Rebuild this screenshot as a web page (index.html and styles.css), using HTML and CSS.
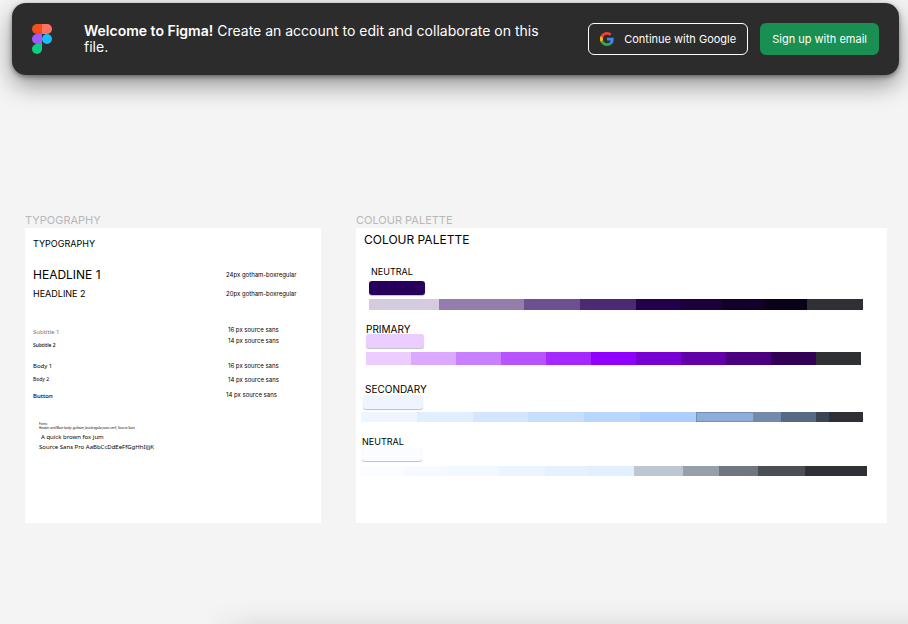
FILE: index.html
```html
<!DOCTYPE html>
<html lang="en">
<head>
<meta charset="utf-8">
<meta name="viewport" content="width=device-width, initial-scale=1">
<title>Figma</title>
<link rel="stylesheet" href="styles.css">
</head>
<body>
<header class="banner">
  <svg class="logo" viewBox="0 0 20 30" aria-hidden="true">
    <path fill="#f24e1e" d="M5 0h5v10H5A5 5 0 0 1 5 0z"/>
    <path fill="#ff7262" d="M10 0h5a5 5 0 0 1 0 10h-5z"/>
    <path fill="#a259ff" d="M5 10h5v10H5a5 5 0 0 1 0-10z"/>
    <circle fill="#1abcfe" cx="15" cy="15" r="5"/>
    <path fill="#0acf83" d="M5 20h5v5a5 5 0 1 1-5-5z"/>
  </svg>
  <p class="message"><strong>Welcome to Figma!</strong> Create an account to edit and collaborate on this file.</p>
  <div class="actions">
    <button class="button google" type="button">
      <svg class="google-icon" viewBox="0 0 48 48" aria-hidden="true">
        <path fill="#ea4335" d="M24 9.5c3.54 0 6.71 1.22 9.21 3.6l6.85-6.85C35.9 2.38 30.47 0 24 0 14.62 0 6.51 5.38 2.56 13.22l7.98 6.19C12.43 13.72 17.74 9.5 24 9.5z"/>
        <path fill="#4285f4" d="M46.98 24.55c0-1.57-.15-3.09-.38-4.55H24v9.02h12.94c-.58 2.96-2.26 5.48-4.78 7.18l7.73 6c4.51-4.18 7.09-10.36 7.09-17.65z"/>
        <path fill="#fbbc05" d="M10.53 28.59c-.48-1.45-.76-2.99-.76-4.59s.27-3.14.76-4.59l-7.98-6.19C.92 16.46 0 20.12 0 24c0 3.88.92 7.54 2.56 10.78l7.97-6.19z"/>
        <path fill="#34a853" d="M24 48c6.48 0 11.93-2.13 15.89-5.81l-7.73-6c-2.15 1.45-4.92 2.3-8.16 2.3-6.26 0-11.57-4.22-13.47-9.91l-7.98 6.19C6.51 42.62 14.62 48 24 48z"/>
      </svg>
      Continue with Google
    </button>
    <button class="button signup" type="button">Sign up with email</button>
  </div>
</header>

<main class="canvas">
  <section class="artboard typography">
    <h2 class="artboard-name">TYPOGRAPHY</h2>
    <div class="sheet">
      <h3 class="sheet-title">TYPOGRAPHY</h3>
      <div class="specs">
        <div class="names">
          <p class="headline-1">HEADLINE 1</p>
          <p class="headline-2">HEADLINE 2</p>
          <p class="subtitle-1">Subtitle 1</p>
          <p class="subtitle-2">Subtitle 2</p>
          <p class="body-1">Body 1</p>
          <p class="body-2">Body 2</p>
          <p class="button-text">Button</p>
        </div>
        <div class="sizes">
          <p class="size-headline-1">24px gotham-boxregular</p>
          <p class="size-headline-2">20px gotham-boxregular</p>
          <div class="source">
            <p>16 px source sans</p>
            <p>14 px source sans</p>
            <p class="size-body-1">16 px source sans</p>
            <p class="size-body-2">14 px source sans</p>
          </div>
          <p class="size-button">14 px source sans</p>
        </div>
      </div>
      <div class="samples">
        <p class="note">Fonts:<br>Header and Main body: gotham_bookregular,sans-serif, Source Sans</p>
        <p class="fox">A quick brown fox jum</p>
        <p class="alphabet">Source Sans Pro AaBbCcDdEeFfGgHhIiJjK</p>
      </div>
    </div>
  </section>

  <section class="artboard palette">
    <h2 class="artboard-name">COLOUR PALETTE</h2>
    <div class="sheet">
      <h3 class="palette-title">COLOUR PALETTE</h3>
      <div class="group ink">
        <h4>NEUTRAL</h4>
        <div class="swatch"></div>
        <div class="ramp">
          <i style="flex-grow:70;background:#d4cbdf"></i><i style="flex-grow:85;background:#927dac"></i><i style="flex-grow:56;background:#6d5090"></i><i style="flex-grow:56;background:#4b2975"></i><i style="flex-grow:44;background:#22004b"></i><i style="flex-grow:42;background:#1b003b"></i><i style="flex-grow:42;background:#13002a"></i><i style="flex-grow:43;background:#0b0019"></i><i style="flex-grow:56;background:#2f3033"></i>
        </div>
      </div>
      <div class="group primary">
        <h4>PRIMARY</h4>
        <div class="swatch"></div>
        <div class="ramp">
          <i style="flex-grow:45;background:#ebcdff"></i><i style="flex-grow:45;background:#dba9ff"></i><i style="flex-grow:45;background:#c980ff"></i><i style="flex-grow:45;background:#b854ff"></i><i style="flex-grow:45;background:#a428ff"></i><i style="flex-grow:45;background:#9000ff"></i><i style="flex-grow:45;background:#7800d3"></i><i style="flex-grow:45;background:#6200a9"></i><i style="flex-grow:45;background:#4a007f"></i><i style="flex-grow:45;background:#320054"></i><i style="flex-grow:45;background:#2f3033"></i>
        </div>
      </div>
      <div class="group secondary">
        <h4>SECONDARY</h4>
        <div class="swatch"></div>
        <div class="ramp">
          <i style="flex-grow:56;background:#eef5ff"></i><i style="flex-grow:56;background:#e1eeff"></i><i style="flex-grow:56;background:#d4e6ff"></i><i style="flex-grow:56;background:#c6deff"></i><i style="flex-grow:56;background:#b8d7ff"></i><i style="flex-grow:56;background:#adcfff"></i><i class="selected" style="flex-grow:57;background:#8fadd6"></i><i style="flex-grow:27;background:#728bac"></i><i style="flex-grow:35;background:#566982"></i><i style="flex-grow:13;background:#394555"></i><i style="flex-grow:34;background:#2f3033"></i>
        </div>
      </div>
      <div class="group pale">
        <h4>NEUTRAL</h4>
        <div class="swatch"></div>
        <div class="ramp">
          <i style="flex-grow:44;background:#fafcff"></i><i style="flex-grow:43;background:#f6faff"></i><i style="flex-grow:52;background:#f2f8ff"></i><i style="flex-grow:46;background:#ebf4ff"></i><i style="flex-grow:42;background:#e5f1ff"></i><i style="flex-grow:47;background:#e1f0ff"></i><i style="flex-grow:49;background:#bcc7d2"></i><i style="flex-grow:36;background:#979fa9"></i><i style="flex-grow:39;background:#70767f"></i><i style="flex-grow:47;background:#4b4f53"></i><i style="flex-grow:62;background:#2f3034"></i>
        </div>
      </div>
    </div>
  </section>
</main>
<div class="bottom-shade" aria-hidden="true"></div>
</body>
</html>
```

FILE: styles.css
```css
* { box-sizing: border-box; }

body {
  display: flow-root;
  margin: 0;
  min-height: 100vh;
  position: relative;
  background: #f4f4f4;
  color: #000;
  font-family: Inter, "Liberation Sans", sans-serif;
}

h2, h3, h4, p { margin: 0; font-weight: 400; }

/* Sign-up banner */
.banner {
  display: flex;
  align-items: center;
  min-height: 72px;
  margin: 3px 9px 0 12px;
  padding: 0 20px;
  border-radius: 14px;
  background: #2c2c2c;
  color: #fff;
  box-shadow: 0 2px 5px rgba(0, 0, 0, 0.4), 0 10px 24px rgba(0, 0, 0, 0.4);
}

.logo { flex: none; width: 20px; height: 30px; }

.message {
  flex: 1;
  margin: 0 32px;
  font-size: 14px;
  line-height: 16px;
}

.message strong { font-weight: 600; }

.actions { display: flex; gap: 12px; }

.button {
  display: flex;
  align-items: center;
  height: 32px;
  padding: 0 12px;
  border: 0;
  border-radius: 6px;
  color: #fff;
  font: 11px/16px Inter, "Liberation Sans", sans-serif;
  white-space: nowrap;
}

.google { gap: 10px; padding: 0 11px; border: 1px solid #fff; background: transparent; }
.google-icon { width: 14px; height: 14px; }
.signup { background: #198f51; }

/* Canvas with its two artboards */
.canvas {
  display: flex;
  gap: 35px;
  padding: 138px 21px 0 25px;
}

.artboard { min-width: 0; }
.typography { flex: 296 1 0; }
.palette { flex: 531 1 0; }

.artboard-name {
  color: #b8b8b8;
  font-size: 11px;
  line-height: 15px;
}

.sheet { min-height: 295px; background: #fff; }

/* Typography sheet */
.typography .sheet { padding: 10px 8px; }
.sheet-title { font-size: 9px; line-height: 12px; }

.specs { display: flex; margin-top: 19px; }
.names { flex: 193 1 0; line-height: 12px; }
.sizes { flex: 87 1 0; font-size: 6px; line-height: 11px; white-space: nowrap; }

.headline-1 { font-size: 12px; }
.headline-2 { margin-top: 7px; font-size: 9px; }
.subtitle-1, .subtitle-2, .body-1, .body-2, .button-text, .samples { font-family: "Noto Sans", sans-serif; }
.subtitle-1 { margin-top: 26px; color: #777; font-size: 6px; }
.subtitle-2 { margin-top: 1px; font-size: 5px; font-weight: 500; }
.body-1 { margin-top: 9px; font-size: 6px; }
.body-2 { margin-top: 1px; font-size: 5px; }
.button-text { margin-top: 5px; font-size: 6px; font-weight: 500; }

.source { margin-top: 25px; padding-left: 2px; }
.size-headline-2 { margin-top: 8px; }
.size-body-1 { margin-top: 14px; }
.size-body-2 { margin-top: 3px; }
.size-button { margin-top: 4px; }

.samples { margin-top: 20px; padding-left: 6px; font-size: 6px; line-height: 10px; }
.note { font-size: 3px; line-height: 4px; }
.fox { margin-top: 2px; padding-left: 2px; }

/* Palette sheet */
.palette .sheet { padding: 5px 20px 0 4px; }
.palette-title { padding-left: 4px; font-size: 12px; line-height: 14px; }

.group h4 { font-size: 9px; line-height: 12px; }
.swatch { width: 60px; height: 14px; border-radius: 3px; box-shadow: 0 1px 1px rgba(0, 0, 0, 0.25); }
.ramp { display: flex; height: 10px; margin-top: 4px; }
.ramp i { flex: 1 1 0; }
.ramp .selected { border: 1px solid #7090bc; }

.ink { margin: 19px 4px 0 9px; }
.ink h4 { padding-left: 2px; }
.ink .swatch { width: 56px; margin-top: 3px; background: #26005a; }
.ink .ramp { height: 11px; }

.primary { margin: 14px 6px 0 6px; }
.primary h4 { font-size: 10px; line-height: 10px; }
.primary .swatch { width: 58px; background: #ebcdff; }
.primary .ramp { height: 13px; }

.secondary { margin: 18px 4px 0 1px; }
.secondary h4 { padding-left: 4px; font-size: 10px; }
.secondary .swatch { margin-left: 2px; background: #eef5ff; }
.secondary .ramp { margin-top: 3px; }

.pale { margin: 14px 0 0; }
.pale h4 { padding-left: 2px; }
.pale .swatch { height: 13px; margin-left: 2px; background: #fbfcff; }
.pale .ramp { margin-top: 5px; }

/* Shade cast by the panel below the window edge */
.bottom-shade {
  position: absolute;
  bottom: 0;
  left: 205px;
  right: 0;
  height: 24px;
  background: linear-gradient(to top, rgba(0, 0, 0, 0.06), rgba(0, 0, 0, 0.02) 50%, transparent);
  mask-image: linear-gradient(to right, transparent, #000 50px);
}
```
